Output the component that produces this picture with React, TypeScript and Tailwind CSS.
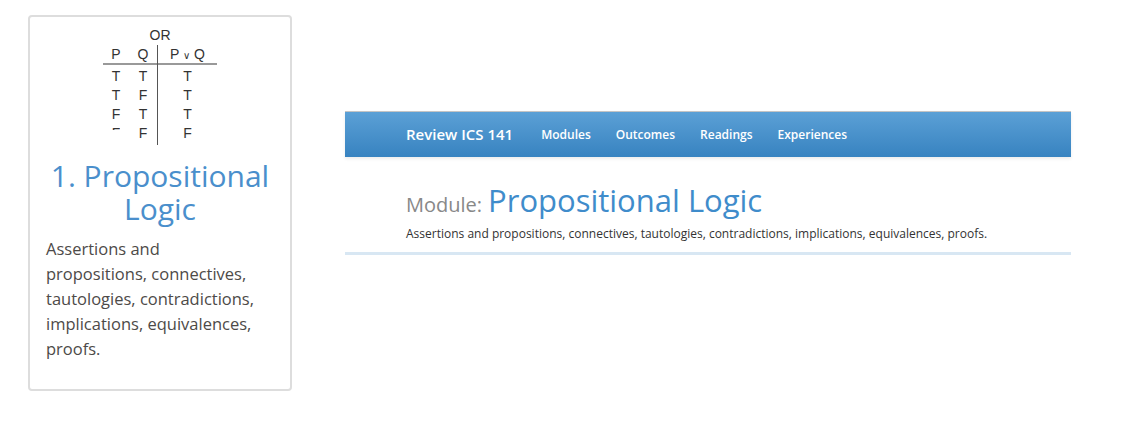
const rows = [
  ['T', 'T', 'T'],
  ['T', 'F', 'T'],
  ['F', 'T', 'T'],
  ['F', 'F', 'F'],
]

const navItems = ['Modules', 'Outcomes', 'Readings', 'Experiences']

const cardLines = [
  'Assertions and',
  'propositions, connectives,',
  'tautologies, contradictions,',
  'implications, equivalences,',
  'proofs.',
]

function TruthTable() {
  return (
    <div className="flex flex-col items-center font-['Liberation_Sans',Arial,sans-serif] text-[14px] leading-[19px] text-[#333]">
      <div className="h-[19px] leading-[19px]">OR</div>
      <div className="flex">
        <div className="flex flex-col border-r border-[#555] pb-[4px]">
          <div className="flex h-[20px] border-b-2 border-[#999]">
            <span className="w-[26px] text-center">P</span>
            <span className="w-[28px] text-center">Q</span>
          </div>
          {rows.map((r, i) => (
            <div key={i} className="flex h-[19px] pt-[3px] leading-[16px]">
              <span className="w-[26px] text-center">
                {i === 3 ? <span className="inline-block h-[5px] overflow-hidden align-top">{r[0]}</span> : r[0]}
              </span>
              <span className="w-[28px] text-center">{r[1]}</span>
            </div>
          ))}
        </div>
        <div className="flex flex-col">
          <div className="h-[20px] w-[59px] border-b-2 border-[#999] text-center">
            P <span className="text-[10px]">∨</span> Q
          </div>
          {rows.map((r, i) => (
            <div key={i} className="h-[19px] w-[59px] pt-[3px] text-center leading-[16px]">{r[2]}</div>
          ))}
        </div>
      </div>
    </div>
  )
}

export default function App() {
  return (
    <div className="flex h-[447px] w-[1121px] items-start bg-white font-['Open_Sans',sans-serif]">
      <div className="ml-[28px] mt-[15px] flex h-[376px] w-[264px] flex-col rounded-[4px] border-2 border-[#ddd] pt-[9px]">
        <TruthTable />
        <h2 className="mt-[14px] px-[8px] text-center text-[30px] leading-[33px] text-[#4a8fcc]">
          1. Propositional Logic
        </h2>
        <p className="mt-[11px] flex flex-col pl-[16px] text-[16.5px] leading-[25px] text-[#4d4a48]">
          {cardLines.map(line => (
            <span key={line}>{line}</span>
          ))}
        </p>
      </div>

      <div className="ml-[53px] mt-[111px] w-[726px] border-b-[3px] border-[#d8e7f3] pb-[10px]">
        <div className="flex h-[46px] items-center gap-[25px] border-t border-[#c4c4c4] bg-gradient-to-b from-[#5ba0d6] to-[#3783c0] pl-[61px] text-white shadow-[0_2px_3px_rgba(0,0,0,0.08)]">
          <span className="mr-[3px] text-[15px] font-semibold">Review ICS 141</span>
          {navItems.map(item => (
            <span key={item} className="text-[12px] font-semibold">{item}</span>
          ))}
        </div>
        <div className="pl-[61px] pt-[25px]">
          <div className="flex items-baseline gap-[6px]">
            <span className="text-[20px] text-[#888]">Module:</span>
            <span className="text-[31px] leading-[36px] text-[#3f8ccb]">Propositional Logic</span>
          </div>
          <p className="mt-[6px] text-[12px] leading-[16px] text-[#333]">
            Assertions and propositions, connectives, tautologies, contradictions, implications, equivalences, proofs.
          </p>
        </div>
      </div>
    </div>
  )
}
